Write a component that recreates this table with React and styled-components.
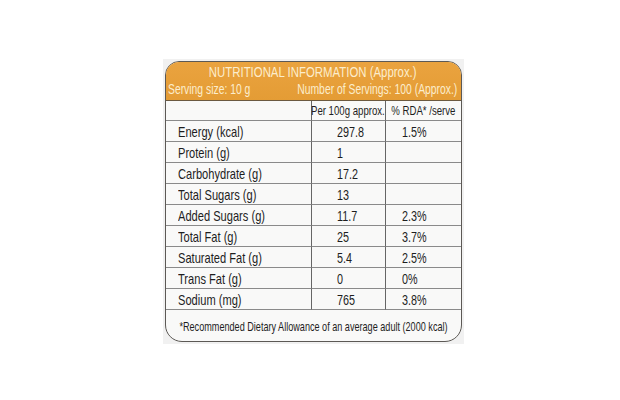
import React from 'react'
import styled, { createGlobalStyle } from 'styled-components'

const GlobalStyle = createGlobalStyle`
  html, body {
    margin: 0;
    padding: 0;
    background: #ffffff;
  }
  body {
    font-family: "Liberation Sans", Arial, sans-serif;
    color: #1e1e1e;
  }
`

const rows = [
  { name: 'Energy (kcal)', value: '297.8', rda: '1.5%' },
  { name: 'Protein (g)', value: '1', rda: '' },
  { name: 'Carbohydrate (g)', value: '17.2', rda: '' },
  { name: 'Total Sugars (g)', value: '13', rda: '' },
  { name: 'Added Sugars (g)', value: '11.7', rda: '2.3%' },
  { name: 'Total Fat (g)', value: '25', rda: '3.7%' },
  { name: 'Saturated Fat (g)', value: '5.4', rda: '2.5%' },
  { name: 'Trans Fat (g)', value: '0', rda: '0%' },
  { name: 'Sodium (mg)', value: '765', rda: '3.8%' },
]

const NutritionLabel = () => {
  return (
    <Page>
      <GlobalStyle />
      <Backdrop>
        <Card>
          <Header>
            <Title>
              <Squeeze $origin="center" $scale={0.76}>NUTRITIONAL INFORMATION (Approx.)</Squeeze>
            </Title>
            <ServingLine>
              <Half>
                <Squeeze>Serving size: 10 g</Squeeze>
              </Half>
              <Half $right>
                <Squeeze $origin="right">Number of Servings: 100 (Approx.)</Squeeze>
              </Half>
            </ServingLine>
          </Header>
          <Grid>
            <Cell />
            <HeadCell><Squeeze $origin="center">Per 100g approx.</Squeeze></HeadCell>
            <HeadCell $last><Squeeze $origin="center">% RDA* /serve</Squeeze></HeadCell>
            {rows.map((r) => (
              <React.Fragment key={r.name}>
                <Cell $pad={12}><Squeeze>{r.name}</Squeeze></Cell>
                <Cell $pad={25}><Squeeze $scale={0.72}>{r.value}</Squeeze></Cell>
                <Cell $pad={16} $last><Squeeze $scale={0.72}>{r.rda}</Squeeze></Cell>
              </React.Fragment>
            ))}
          </Grid>
          <Footnote>
            <Squeeze $origin="center" $scale={0.7}>
              *Recommended Dietary Allowance of an average adult (2000 kcal)
            </Squeeze>
          </Footnote>
        </Card>
      </Backdrop>
    </Page>
  )
}

const Page = styled.div`
  width: 620px;
  height: 400px;
  display: flex;
  align-items: center;
  justify-content: center;
  padding: 3px 0 0 6px;
  box-sizing: border-box;
`

const Backdrop = styled.div`
  background: #f1f1f1;
  padding: 2px;
`

const Card = styled.div`
  width: 297px;
  height: 281px;
  box-sizing: border-box;
  border: 1.5px solid #5c5955;
  border-radius: 14px 14px 17px 17px;
  overflow: hidden;
  background: #f9f9f8;
  display: flex;
  flex-direction: column;
`

// printed label uses a condensed face; squeeze a regular one horizontally
const Squeeze = styled.span`
  display: inline-block;
  white-space: nowrap;
  flex-shrink: 0;
  transform: scaleX(${(p) => p.$scale || 0.74});
  transform-origin: ${(p) => p.$origin || 'left'} center;
`

const Header = styled.div`
  height: 39px;
  background: linear-gradient(#eaa33f, #e49c35);
  color: #fcedcc;
  border-bottom: 1.5px solid #6b5940;
  display: flex;
  flex-direction: column;
  padding: 1px 3px 0 2px;
  box-sizing: border-box;
`

const Title = styled.div`
  display: flex;
  justify-content: center;
  font-size: 15px;
  line-height: 18px;
`

const ServingLine = styled.div`
  display: flex;
  font-size: 14px;
  line-height: 18px;
  margin-top: -1px;
`

const Half = styled.div`
  flex: 1;
  min-width: 0;
  display: flex;
  justify-content: ${(p) => (p.$right ? 'flex-end' : 'flex-start')};
`

const Grid = styled.div`
  display: grid;
  grid-template-columns: 146px 74px 1fr;
  grid-template-rows: 20px repeat(9, 21px);
`

const Cell = styled.div`
  border-bottom: 1px solid #8a8a8a;
  border-right: ${(p) => (p.$last ? 'none' : '1px solid #666666')};
  display: flex;
  align-items: center;
  padding-left: ${(p) => p.$pad || 0}px;
  font-size: 15px;
  min-width: 0;
`

const HeadCell = styled(Cell)`
  justify-content: center;
  font-size: 13px;
`

const Footnote = styled.div`
  flex: 1;
  display: flex;
  align-items: center;
  justify-content: center;
  font-size: 13px;
  padding-top: 1px;
`

export default NutritionLabel
